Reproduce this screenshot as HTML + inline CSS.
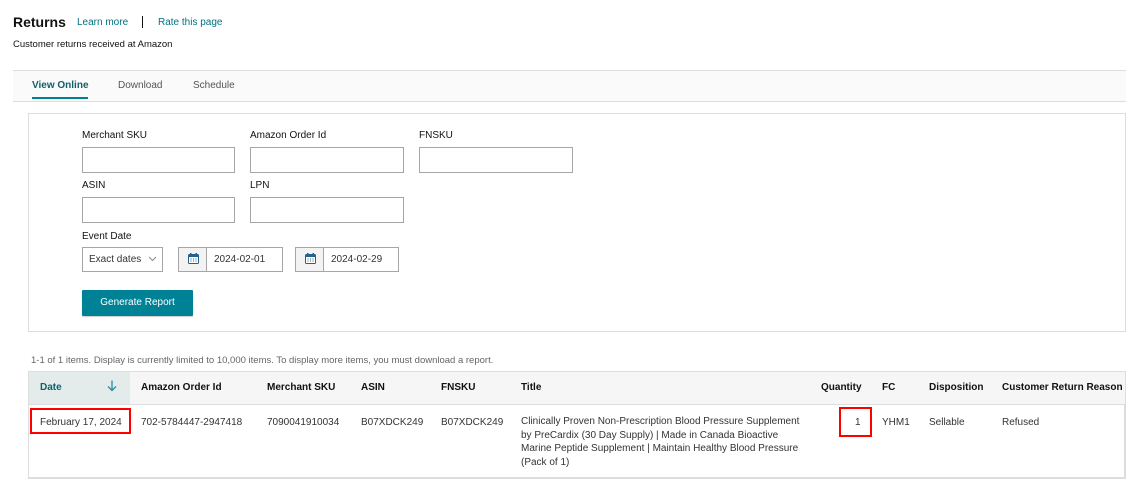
<!DOCTYPE html>
<html><head><meta charset="utf-8"><style>
*{margin:0;padding:0;box-sizing:border-box}
body{width:1130px;height:480px;background:#fff;font-family:"Liberation Sans",sans-serif;font-size:10px;color:#111;position:relative;overflow:hidden}
.a{position:absolute;white-space:nowrap}
.link{color:#00737f}
.inp{position:absolute;border:1px solid #a6a6a6;background:#fff;height:26px}
.lbl{position:absolute;font-size:10px;color:#111}
.h{position:absolute;top:382px;font-weight:bold;font-size:10px;color:#111}
.c{position:absolute;top:417px;font-size:10px;color:#333}
</style></head><body>
<div class="a" style="left:13px;top:14px;font-size:14px;font-weight:bold;color:#111">Returns</div>
<div class="a link" style="left:77px;top:17px;font-size:10px">Learn more</div>
<div class="a" style="left:142px;top:16px;width:1px;height:12px;background:#111"></div>
<div class="a link" style="left:158px;top:17px;font-size:10px">Rate this page</div>
<div class="a" style="left:13px;top:39px;font-size:9.5px">Customer returns received at Amazon</div>

<div class="a" style="left:13px;top:70px;width:1113px;height:32px;background:#fafafa;border-top:1px solid #ddd;border-bottom:1px solid #ddd"></div>
<div class="a" style="left:32px;top:80px;font-size:10px;font-weight:bold;color:#0f5f69">View Online</div>
<div class="a" style="left:32px;top:97px;width:56px;height:2px;background:#00838f"></div>
<div class="a" style="left:118px;top:80px;font-size:10px;color:#555">Download</div>
<div class="a" style="left:193px;top:80px;font-size:10px;color:#555">Schedule</div>

<div class="a" style="left:28px;top:113px;width:1098px;height:219px;border:1px solid #ddd"></div>
<div class="lbl" style="left:82px;top:130px">Merchant SKU</div>
<div class="lbl" style="left:250px;top:130px">Amazon Order Id</div>
<div class="lbl" style="left:419px;top:130px">FNSKU</div>
<div class="inp" style="left:82px;top:147px;width:153px"></div>
<div class="inp" style="left:250px;top:147px;width:154px"></div>
<div class="inp" style="left:419px;top:147px;width:154px"></div>
<div class="lbl" style="left:82px;top:180px">ASIN</div>
<div class="lbl" style="left:250px;top:180px">LPN</div>
<div class="inp" style="left:82px;top:197px;width:153px"></div>
<div class="inp" style="left:250px;top:197px;width:154px"></div>
<div class="lbl" style="left:82px;top:231px">Event Date</div>
<div class="inp" style="left:82px;top:247px;width:81px;height:25px"><span class="a" style="left:6px;top:6px;font-size:10px;color:#333">Exact dates</span>
<svg class="a" style="left:65px;top:8px" width="9" height="6" viewBox="0 0 9 6"><path d="M1 1l3.5 3.5L8 1" fill="none" stroke="#888" stroke-width="1"/></svg></div>
<div class="inp" style="left:178px;top:247px;width:105px;height:25px;background:#fff">
<div class="a" style="left:0;top:0;width:28px;height:23px;background:#f3f3f3;border-right:1px solid #a6a6a6"></div>
<svg class="a" style="left:9px;top:5px" width="11" height="11" viewBox="0 0 11 11"><rect x="0.5" y="1.5" width="10" height="9" rx="1" fill="#fff" stroke="#23628c"/><rect x="0.5" y="1.5" width="10" height="2.5" fill="#23628c"/><rect x="2" y="0" width="1.5" height="2.5" fill="#23628c"/><rect x="7.5" y="0" width="1.5" height="2.5" fill="#23628c"/><path d="M2.5 6h1M5 6h1M7.5 6h1M2.5 8h1M5 8h1M7.5 8h1" stroke="#23628c"/></svg>
<span class="a" style="left:35px;top:6px;font-size:10px;color:#333">2024-02-01</span></div>
<div class="inp" style="left:295px;top:247px;width:104px;height:25px;background:#fff">
<div class="a" style="left:0;top:0;width:28px;height:23px;background:#f3f3f3;border-right:1px solid #a6a6a6"></div>
<svg class="a" style="left:9px;top:5px" width="11" height="11" viewBox="0 0 11 11"><rect x="0.5" y="1.5" width="10" height="9" rx="1" fill="#fff" stroke="#23628c"/><rect x="0.5" y="1.5" width="10" height="2.5" fill="#23628c"/><rect x="2" y="0" width="1.5" height="2.5" fill="#23628c"/><rect x="7.5" y="0" width="1.5" height="2.5" fill="#23628c"/><path d="M2.5 6h1M5 6h1M7.5 6h1M2.5 8h1M5 8h1M7.5 8h1" stroke="#23628c"/></svg>
<span class="a" style="left:35px;top:6px;font-size:10px;color:#333">2024-02-29</span></div>
<div class="a" style="left:82px;top:290px;width:111px;height:26px;background:#008296;border-radius:1px;box-shadow:0 1px 1px rgba(0,0,0,.2);color:#fff;font-size:10px;text-align:center;line-height:26px">Generate Report</div>

<div class="a" style="left:31px;top:355px;font-size:9.5px;color:#666">1-1 of 1 items. Display is currently limited to 10,000 items. To display more items, you must download a report.</div>

<div class="a" style="left:28px;top:371px;width:1098px;height:108px;border:1px solid #ddd;border-right:2px solid #ddd;border-bottom:2px solid #ddd"></div>
<div class="a" style="left:29px;top:372px;width:1096px;height:33px;background:#f6f6f6;border-bottom:1px solid #ddd"></div>
<div class="a" style="left:29px;top:372px;width:101px;height:33px;background:#e3ebeb;border-bottom:1px solid #ddd"></div>
<div class="h" style="left:40px;color:#0f5f69">Date</div>
<svg class="a" style="left:107px;top:380px" width="10" height="12" viewBox="0 0 10 12"><path d="M5 0.5v10M1 6.5l4 4 4-4" fill="none" stroke="#2a8aa0" stroke-width="1.3"/></svg>
<div class="h" style="left:141px">Amazon Order Id</div>
<div class="h" style="left:267px">Merchant SKU</div>
<div class="h" style="left:361px">ASIN</div>
<div class="h" style="left:441px">FNSKU</div>
<div class="h" style="left:521px">Title</div>
<div class="h" style="left:821px">Quantity</div>
<div class="h" style="left:882px">FC</div>
<div class="h" style="left:929px">Disposition</div>
<div class="h" style="left:1002px">Customer Return Reason</div>

<div class="c" style="left:40px">February 17, 2024</div>
<div class="c link" style="left:141px">702-5784447-2947418</div>
<div class="c" style="left:267px">7090041910034</div>
<div class="c" style="left:361px">B07XDCK249</div>
<div class="c" style="left:441px">B07XDCK249</div>
<div class="c" style="left:521px;top:415px;white-space:normal;width:285px;line-height:13.7px">Clinically Proven Non-Prescription Blood Pressure Supplement by PreCardix (30 Day Supply) | Made in Canada Bioactive Marine Peptide Supplement | Maintain Healthy Blood Pressure (Pack of 1)</div>
<div class="c" style="left:855px">1</div>
<div class="c" style="left:882px">YHM1</div>
<div class="c" style="left:929px">Sellable</div>
<div class="c" style="left:1002px">Refused</div>

<div class="a" style="left:30px;top:408px;width:101px;height:26px;border:2px solid #f00"></div>
<div class="a" style="left:839px;top:407px;width:33px;height:30px;border:2px solid #f00"></div>
</body></html>
